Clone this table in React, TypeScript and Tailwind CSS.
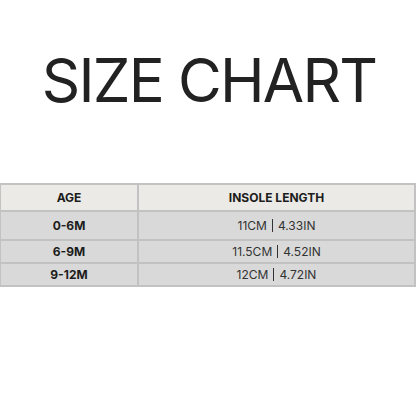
export default function App() {
  const rows = [
    { age: "0-6M", cm: "11CM", inch: "4.33IN", h: "h-[29px]" },
    { age: "6-9M", cm: "11.5CM", inch: "4.52IN", h: "h-[23px]" },
    { age: "9-12M", cm: "12CM", inch: "4.72IN", h: "h-[23px]" },
  ];
  return (
    <div className="w-[416px] h-[416px] bg-white flex flex-col" style={{ fontFamily: "Inter, 'Liberation Sans', sans-serif" }}>
      <div className="pt-[50px] h-[183px] flex justify-center">
        <div className="text-[60px] leading-none font-normal text-[#222222] tracking-[-1.8px] pl-[2px]">SIZE CHART</div>
      </div>
      <div className="w-[416px] border-t-2 border-l border-r-2 border-[#c2c2c2] flex flex-col">
        <div className="flex h-[27px] border-b-2 border-[#c2c2c2] bg-[#ebeae6] text-[12px] font-bold text-[#1c1c1c]">
          <div className="w-[138px] border-r-2 border-[#c2c2c2] flex items-center justify-center">AGE</div>
          <div className="flex-1 flex items-center justify-center">INSOLE LENGTH</div>
        </div>
        {rows.map((r) => (
          <div key={r.age} className={`flex ${r.h} border-b-2 border-[#c2c2c2] bg-[#d9d9d9] text-[12px]`}>
            <div className="w-[138px] border-r-2 border-[#c2c2c2] flex items-center justify-center font-bold text-[#1c1c1c]">{r.age}</div>
            <div className="flex-1 flex items-center justify-center text-[#333333]">
              {r.cm}
              <span className="mx-[5px] inline-block w-px h-[13px] bg-[#333333]"></span>
              {r.inch}
            </div>
          </div>
        ))}
      </div>
    </div>
  );
}
